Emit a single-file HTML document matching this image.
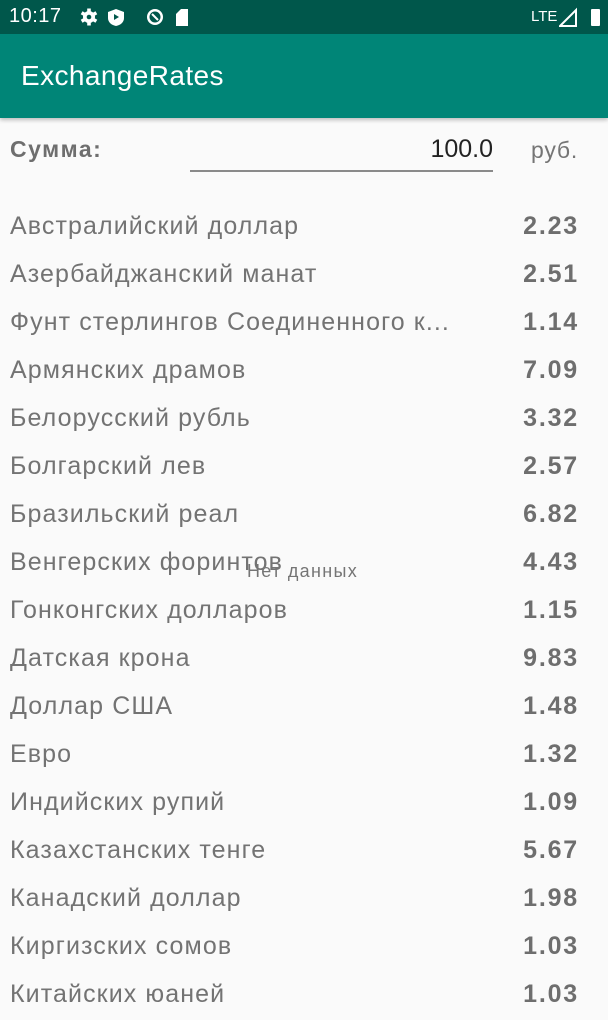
<!DOCTYPE html>
<html><head><meta charset="utf-8"><style>
*{margin:0;padding:0;box-sizing:border-box}
body{width:608px;height:1020px;overflow:hidden;background:#fafafa;font-family:"Liberation Sans",sans-serif;position:relative}
.sb{height:34px;background:#00574b;color:#fff;position:relative}
.ab{height:84px;background:#008577;color:#fff;font-size:28px;letter-spacing:0.4px;padding-left:21px;line-height:84px;box-shadow:0 2px 4px rgba(0,0,0,.25)}
.row{position:absolute;left:10px;right:31px;height:48px;font-size:25px;letter-spacing:1.1px;color:#737373;line-height:48px;white-space:nowrap}
.row b{position:absolute;right:0;top:0;color:#6e6e6e;letter-spacing:1.8px;margin-right:-2px}
</style></head><body>
<div class="sb">
<span style="position:absolute;left:9px;top:5px;font-size:20px;letter-spacing:0.5px">10:17</span>
<svg style="position:absolute;left:78px;top:7px" width="110" height="20" viewBox="0 0 110 20" fill="#fff">
<g transform="translate(11 10)"><circle r="6"/><rect x="-1.8" y="-8.5" width="3.6" height="17"/><rect x="-1.8" y="-8.5" width="3.6" height="17" transform="rotate(60)"/><rect x="-1.8" y="-8.5" width="3.6" height="17" transform="rotate(120)"/><circle r="2.3" fill="#00574b"/></g>
<path d="M38 2l8 3v6c0 4-3 7-8 8-5-1-8-4-8-8V5z"/><path d="M36 7l5 3-5 3z" fill="#00574b"/>
<circle cx="77" cy="10" r="8"/><circle cx="77" cy="10" r="5.5" fill="#00574b"/><path d="M74 7l6 6" stroke="#fff" stroke-width="2"/>
<path d="M103 2h7v17h-12V7z"/>
</svg>
<span style="position:absolute;left:531px;top:8px;font-size:15px">LTE</span>
<svg style="position:absolute;left:559px;top:7px" width="45" height="20" viewBox="0 0 45 20" fill="#fff"><path d="M1 19L17 3v16z" stroke="#fff" fill="none" stroke-width="2"/><rect x="32" y="2" width="9" height="17" rx="1"/></svg>
</div>
<div class="ab">ExchangeRates</div>
<div style="position:absolute;left:10px;top:136px;font-size:23px;letter-spacing:1.5px;font-weight:bold;color:#6e6e6e">Сумма:</div>
<div style="position:absolute;left:190px;width:303px;top:135px;text-align:right;font-size:25px;color:#222">100.0</div>
<div style="position:absolute;left:190px;width:303px;top:170px;height:2px;background:#8a8a8a"></div>
<div style="position:absolute;left:531px;top:137px;font-size:23px;letter-spacing:0.8px;color:#757575">руб.</div>
<div class="row" style="top:202px">Австралийский доллар<b>2.23</b></div>
<div class="row" style="top:250px">Азербайджанский манат<b>2.51</b></div>
<div class="row" style="top:298px">Фунт стерлингов Соединенного к...<b>1.14</b></div>
<div class="row" style="top:346px">Армянских драмов<b>7.09</b></div>
<div class="row" style="top:394px">Белорусский рубль<b>3.32</b></div>
<div class="row" style="top:442px">Болгарский лев<b>2.57</b></div>
<div class="row" style="top:490px">Бразильский реал<b>6.82</b></div>
<div class="row" style="top:538px">Венгерских форинтов<b>4.43</b></div>
<div class="row" style="top:586px">Гонконгских долларов<b>1.15</b></div>
<div class="row" style="top:634px">Датская крона<b>9.83</b></div>
<div class="row" style="top:682px">Доллар США<b>1.48</b></div>
<div class="row" style="top:730px">Евро<b>1.32</b></div>
<div class="row" style="top:778px">Индийских рупий<b>1.09</b></div>
<div class="row" style="top:826px">Казахстанских тенге<b>5.67</b></div>
<div class="row" style="top:874px">Канадский доллар<b>1.98</b></div>
<div class="row" style="top:922px">Киргизских сомов<b>1.03</b></div>
<div class="row" style="top:970px">Китайских юаней<b>1.03</b></div>
<div style="position:absolute;left:247px;top:561px;font-size:18px;letter-spacing:1.3px;color:#757575">Нет данных</div>
</body></html>
